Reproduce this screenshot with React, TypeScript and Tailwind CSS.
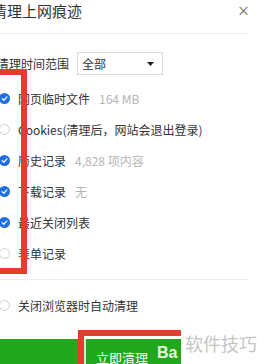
import React from "react";

const font = { fontFamily: '"Noto Sans CJK SC", "Noto Sans", sans-serif' };

function Check({ on }: { on: boolean }) {
  if (on) {
    return (
      <span className="flex h-[11px] w-[11px] shrink-0 items-center justify-center rounded-full bg-[#1f6fe0]">
        <svg width="7" height="7" viewBox="0 0 8 8" fill="none">
          <path d="M1.3 4.2 L3.2 6 L6.8 2.2" stroke="white" strokeWidth="1.4" strokeLinecap="round" strokeLinejoin="round" />
        </svg>
      </span>
    );
  }
  return <span className="h-[11px] w-[11px] shrink-0 rounded-full border border-[#d0d0d0] bg-white" />;
}

function Row({ on, label, value }: { on: boolean; label: string; value?: string }) {
  return (
    <div className="flex h-[31px] items-center gap-[8px]">
      <Check on={on} />
      <span className="text-[12px] text-[#333] whitespace-nowrap">{label}</span>
      {value && <span className="ml-[1px] text-[12px] text-[#b5b5b5] whitespace-nowrap">{value}</span>}
    </div>
  );
}

export default function App() {
  return (
    <div className="relative h-[364px] w-[259px] overflow-hidden bg-white" style={font}>
      <div className="ml-[-1px] flex flex-col">
        <div className="flex h-[34px] w-[249px] items-start justify-between border-b border-[#ececec]">
          <span className="ml-[-7px] text-[15px] leading-[22px] text-[#333]">清理上网痕迹</span>
          <span className="mr-[-2px] mt-[2px] text-[13px] leading-[16px] text-[#555]">×</span>
        </div>

        <div className="mt-[18px] flex h-[23px] items-center">
          <span className="ml-[-2px] w-[80px] text-[12px] text-[#333] whitespace-nowrap">清理时间范围</span>
          <div className="flex h-[23px] w-[86px] items-center justify-between border border-[#dcdcdc] pl-[4px] pr-[8px]">
            <span className="text-[12px] text-[#333]">全部</span>
            <svg width="7" height="4" viewBox="0 0 7 4">
              <path d="M0 0 H7 L3.5 4 Z" fill="#222" />
            </svg>
          </div>
        </div>

        <div className="mt-[8px] flex flex-col">
          <Row on label="网页临时文件" value="164 MB" />
          <Row on={false} label="Cookies(清理后，网站会退出登录)" />
          <Row on label="历史记录" value="4,828 项内容" />
          <Row on label="下载记录" value="无" />
          <Row on label="最近关闭列表" />
          <Row on={false} label="表单记录" />
        </div>

        <div className="mt-[10px] h-px w-[249px] bg-[#ececec]" />

        <div className="mt-[10px]">
          <Row on={false} label="关闭浏览器时自动清理" />
        </div>

        <div className="mt-[18px] flex h-[40px] w-[182px] items-start bg-[#22a81c] pl-[97px] pt-[11px]">
          <span className="text-[13px] leading-[16px] text-white underline underline-offset-2">立即清理</span>
        </div>
      </div>

      {/* red annotation boxes */}
      <div className="absolute left-[-12px] top-[69px] h-[205px] w-[39px] border-[6px] border-[#e63b2e]" />
      <div className="absolute left-[78px] top-[330px] h-[60px] w-[130px] border-[6px] border-[#e63b2e]">
        <div className="h-full w-full border-2 border-white/80" />
      </div>

      {/* watermark */}
      <span className="absolute left-[157px] top-[344px] text-[16px] font-bold leading-[18px] text-[#e6f5e0]" style={{ fontFamily: '"Liberation Sans", Arial, sans-serif' }}>
        Ba
      </span>
      <div className="absolute left-[181px] top-[318px] flex h-[46px] w-[78px] items-start bg-white pl-[4px] pt-[14px]">
        <span className="text-[18px] leading-[22px] text-[#c4c4c4] whitespace-nowrap">软件技巧</span>
      </div>
    </div>
  );
}
